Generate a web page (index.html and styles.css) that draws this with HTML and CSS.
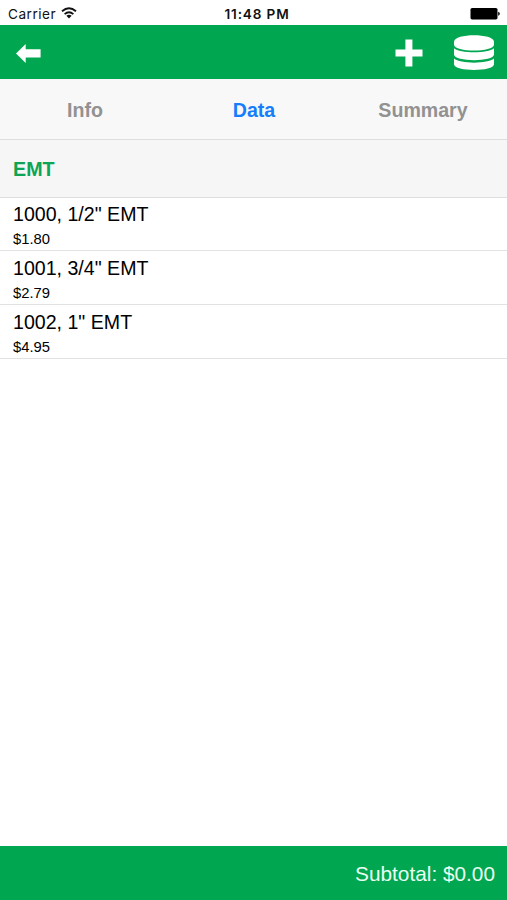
FILE: index.html
```html
<!DOCTYPE html>
<html lang="en">
<head>
<meta charset="utf-8">
<title>Data</title>
<link rel="stylesheet" href="styles.css">
</head>
<body>
<div class="app">
  <div class="status">
    <div class="carrier"><span>Carrier</span>
      <svg class="wifi" width="16" height="12" viewBox="0 0 16 12" fill="none" stroke="#111" stroke-width="1.8"><path d="M1 4.3Q8 -1.7 15 4.3M3.6 7.1Q8 3.3 12.4 7.1"/><path d="M5.4 8.8Q8 6.6 10.6 8.8L8 11.4Z" fill="#111" stroke="none"/></svg>
    </div>
    <div class="clock">11:48 PM</div>
    <svg class="battery" width="30" height="12" viewBox="0 0 30 12"><rect x=".5" width="27" height="11.4" rx="1.6"/><path d="M28.2 3.8Q29.8 4.2 29.8 5.8Q29.8 7.4 28.2 7.8Z"/></svg>
  </div>
  <header class="toolbar">
    <svg class="back" width="25" height="19" viewBox="0 0 25 19" fill="#fff"><path d="M0 9.5L9.7 0V5.3H24.6V13.5H9.7V19Z"/></svg>
    <div class="actions">
      <svg width="28" height="28" viewBox="0 0 28 28" fill="#fff"><path d="M10.4 .5H17.4V10.6H27.5V17.4H17.4V27.5H10.4V17.4H.5V10.6H10.4Z"/></svg>
      <svg width="40" height="36" viewBox="0 0 40 36" fill="#fff"><path d="M0 6.8C0 -1.8 40 -1.8 40 6.8V9.5C40 17.5 0 17.5 0 9.5Z"/><path d="M0 13.2C6 18.7 34 18.7 40 13.2V19.5C40 27 0 27 0 19.5Z"/><path d="M0 23.5C6 29 34 29 40 23.5V29.2C40 36.8 0 36.8 0 29.2Z"/></svg>
    </div>
  </header>
  <nav class="tabs">
    <span class="tab">Info</span><span class="tab active">Data</span><span class="tab">Summary</span>
  </nav>
  <h2 class="group">EMT</h2>
  <ul class="items">
    <li><div class="name">1000, 1/2" EMT</div><div class="price">$1.80</div></li>
    <li><div class="name">1001, 3/4" EMT</div><div class="price">$2.79</div></li>
    <li><div class="name">1002, 1" EMT</div><div class="price">$4.95</div></li>
  </ul>
  <footer class="footer">Subtotal: $0.00</footer>
</div>
</body>
</html>
```
FILE: styles.css
```css
* { box-sizing: border-box; }
body { margin: 0; background: #fff; color: #000; font-family: "Liberation Sans", Arial, sans-serif; }
.app { display: flex; flex-direction: column; height: 900px; overflow: hidden; }
.status { display: grid; grid-template-columns: 1fr auto 1fr; align-items: center; height: 25px; padding: 2px 7px 0 8px; font: 13.6px/20px Inter, sans-serif; color: #111; }
.carrier { display: flex; align-items: center; gap: 5px; letter-spacing: .5px; }
.wifi { margin-top: -2px; }
.clock { font-weight: 600; letter-spacing: .85px; padding-left: 6px; }
.battery { justify-self: end; }
.toolbar { display: flex; justify-content: space-between; align-items: center; height: 54px; padding: 2px 13px 0 16px; background: #00a650; }
.actions { display: flex; align-items: center; gap: 31px; }
.tabs { display: grid; grid-template-columns: repeat(3, 1fr); height: 61px; background: #f8f8f8; border-bottom: 1px solid #dedede; }
.tab { padding-left: 1px; text-align: center; font-weight: 700; font-size: 19.6px; line-height: 62px; color: #929292; }
.tab.active { color: #157efb; }
.group { margin: 0; height: 58px; padding-left: 13px; background: #f6f6f6; border-bottom: 1px solid #dedede; font-size: 19.7px; line-height: 59px; color: #0ca557; }
.items { list-style: none; margin: 0; padding: 0; flex: 1; }
.items li { height: 54px; padding: 4px 13px 0; border-bottom: 1px solid #e2e2e2; }
.items li:first-child { height: 53px; padding-top: 3px; }
.name { font-size: 19.6px; line-height: 26px; }
.price { font-size: 14.8px; line-height: 25px; }
.footer { height: 54px; padding-right: 12px; background: #00a650; color: #e9fff1; font-size: 20.8px; line-height: 55px; text-align: right; }
```
